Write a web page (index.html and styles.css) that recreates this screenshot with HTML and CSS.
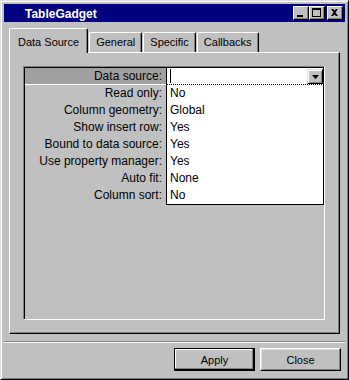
FILE: index.html
```html
<!DOCTYPE html>
<html lang="en">
<head>
  <meta charset="UTF-8">
  <title>TableGadget</title>
  <link rel="stylesheet" href="styles.css">
</head>
<body>

<div class="window">
  <div class="titlebar">
    <span class="title">TableGadget</span>
    <div class="caption-buttons">
      <div class="cap-btn">
        <svg width="14" height="12" viewBox="0 0 14 12"><rect x="3" y="8" width="6" height="2" fill="#000"/></svg>
      </div>
      <div class="cap-btn">
        <svg width="14" height="12" viewBox="0 0 14 12"><path d="M2 1h9v9h-9z M3 3v6h7v-6z" fill="#000" fill-rule="evenodd"/></svg>
      </div>
      <div class="cap-btn close">
        <svg width="14" height="12" viewBox="0 0 14 12"><path d="M3 2h2l1.5 1.5 1.5-1.5h2l-2.5 3.5 2.5 3.5h-2l-1.5-1.5-1.5 1.5h-2l2.5-3.5z" fill="#000"/></svg>
      </div>
    </div>
  </div>

  <div class="tabs">
    <div class="tab active">Data Source</div>
    <div class="tab">General</div>
    <div class="tab">Specific</div>
    <div class="tab">Callbacks</div>
  </div>

  <div class="tab-page">
    <div class="prop-frame">
      <div class="prop-row selected">
        <div class="prop-label">Data source:</div>
        <div class="prop-value combo">
          <span class="caret"></span>
          <div class="combo-btn">
            <svg width="7" height="4" viewBox="0 0 7 4"><path d="M0 0h7l-3.5 4z" fill="#000"/></svg>
          </div>
        </div>
      </div>
      <div class="prop-row">
        <div class="prop-label">Read only:</div>
        <div class="prop-value">No</div>
      </div>
      <div class="prop-row">
        <div class="prop-label">Column geometry:</div>
        <div class="prop-value">Global</div>
      </div>
      <div class="prop-row">
        <div class="prop-label">Show insert row:</div>
        <div class="prop-value">Yes</div>
      </div>
      <div class="prop-row">
        <div class="prop-label">Bound to data source:</div>
        <div class="prop-value">Yes</div>
      </div>
      <div class="prop-row">
        <div class="prop-label">Use property manager:</div>
        <div class="prop-value">Yes</div>
      </div>
      <div class="prop-row">
        <div class="prop-label">Auto fit:</div>
        <div class="prop-value">None</div>
      </div>
      <div class="prop-row last">
        <div class="prop-label">Column sort:</div>
        <div class="prop-value">No</div>
      </div>
    </div>
  </div>

  <div class="separator"></div>

  <div class="actions">
    <button class="btn default">Apply</button>
    <button class="btn">Close</button>
  </div>
</div>

</body>
</html>
```

FILE: styles.css
```css
* {
  box-sizing: border-box;
}

body {
  margin: 0;
  font-family: "Liberation Sans", Arial, sans-serif;
  color: #000;
  background: #c0c0c0;
}

.window {
  width: 349px;
  height: 380px;
  padding: 3px;
  background: #c0c0c0;
  border: 1px solid;
  border-color: #dfdfdf #000 #000 #dfdfdf;
  box-shadow: inset 1px 1px 0 #fff, inset -1px -1px 0 #808080;
}

/* title bar */
.titlebar {
  height: 18px;
  background: #000080;
  display: flex;
  align-items: center;
  padding: 0 2px 0 21px;
}

.title {
  color: #fff;
  font-weight: bold;
  font-size: 12px;
  padding-top: 1px;
}

.caption-buttons {
  display: flex;
  margin-left: auto;
}

.cap-btn {
  width: 16px;
  height: 14px;
  background: #c0c0c0;
  border: 1px solid;
  border-color: #fff #000 #000 #fff;
  box-shadow: inset -1px -1px 0 #808080;
}

.cap-btn svg {
  display: block;
}

.cap-btn.close {
  margin-left: 2px;
}

/* tabs */
.tabs {
  display: flex;
  align-items: flex-end;
  height: 24px;
  margin: 6px 5px 0;
  font-size: 11px;
}

.tab {
  height: 20px;
  display: flex;
  align-items: flex-end;
  line-height: 13px;
  padding: 0 6px 3px;
  margin-left: 1px;
  background: #c0c0c0;
  border-top: 1px solid #fff;
  border-left: 1px solid #fff;
  border-right: 1px solid #000;
  border-radius: 2px 2px 0 0;
  box-shadow: inset -1px 0 0 #808080;
}

.tab.active {
  height: 25px;
  margin: 0 0 -1px;
  padding: 0 8px 4px;
  position: relative;
  z-index: 1;
}

/* tab page */
.tab-page {
  height: 282px;
  margin: 0 5px;
  padding: 13px 13px 12px;
  border-top: 1px solid #fff;
  border-left: 1px solid #fff;
  border-right: 1px solid #000;
  border-bottom: 1px solid #000;
  box-shadow: inset -1px -1px 0 #808080;
}

.prop-frame {
  width: 302px;
  height: 254px;
  padding: 1px 0 0 1px;
  border: 1px solid;
  border-color: #808080 #fff #fff #808080;
  box-shadow: inset 1px 1px 0 #000;
}

.prop-row {
  display: grid;
  grid-template-columns: 141px 1fr;
  height: 17px;
  font-size: 12px;
  line-height: 17px;
}

.prop-label {
  text-align: right;
  padding-right: 4px;
  white-space: nowrap;
}

.prop-row.selected .prop-label {
  background: #a0a0a0;
  border-bottom: 1px solid #fff;
  line-height: 16px;
}

.prop-value {
  background: #fff;
  border-left: 1px solid #000;
  border-right: 1px solid #000;
  border-bottom: 1px dotted #000;
  padding-left: 3px;
}

.prop-row.last .prop-value {
  border-bottom: 1px solid #000;
}

.combo {
  display: flex;
  align-items: flex-end;
}

.caret {
  width: 1px;
  height: 14px;
  margin-bottom: 1px;
  background: #000;
}

.combo-btn {
  width: 16px;
  height: 15px;
  margin-left: auto;
  display: flex;
  align-items: center;
  justify-content: center;
  background: #c0c0c0;
  border: 1px solid;
  border-color: #dfdfdf #000 #000 #dfdfdf;
  box-shadow: inset 1px 1px 0 #fff, inset -1px -1px 0 #808080;
}

.combo-btn svg {
  display: block;
}

/* bottom */
.separator {
  height: 2px;
  margin-top: 7px;
  border-top: 1px solid #808080;
  border-bottom: 1px solid #fff;
}

.actions {
  display: flex;
  justify-content: flex-end;
  gap: 5px;
  margin: 5px 4px 0 0;
}

.btn {
  width: 81px;
  height: 23px;
  padding: 0;
  font-family: "Liberation Sans", Arial, sans-serif;
  font-size: 11px;
  color: #000;
  background: #c0c0c0;
  border: 1px solid;
  border-color: #fff #000 #000 #fff;
  box-shadow: inset -1px -1px 0 #808080, inset 1px 1px 0 #dfdfdf;
}

.btn.default {
  border-color: #000;
  box-shadow: inset -1px -1px 0 #000, inset -2px -2px 0 #808080, inset 1px 1px 0 #fff;
}
```
